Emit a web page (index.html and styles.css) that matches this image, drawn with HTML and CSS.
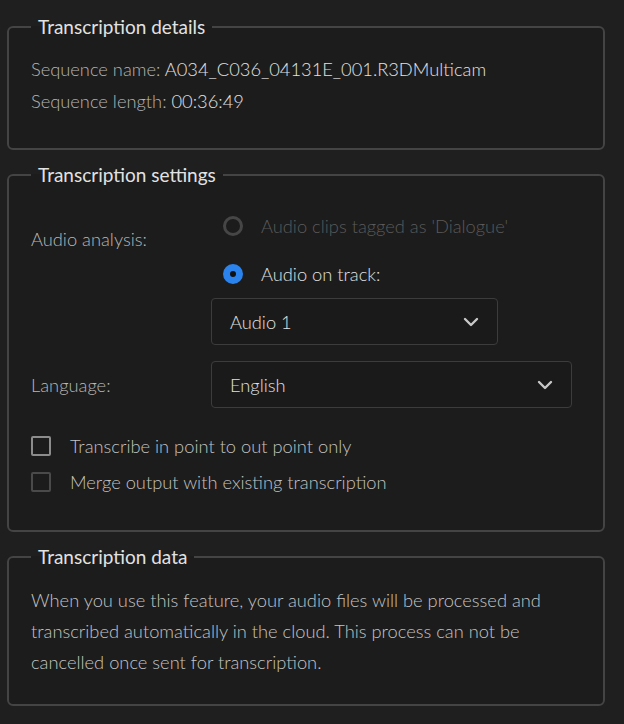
FILE: index.html
```html
<!DOCTYPE html>
<html>
<head>
<meta charset="utf-8">
<link rel="stylesheet" href="styles.css">
</head>
<body>
<div class="panel">
  <fieldset class="group details">
    <legend>Transcription details</legend>
    <div class="line"><span class="key">Sequence name:</span> <span class="val">A034_C036_04131E_001.R3DMulticam</span></div>
    <div class="line"><span class="key">Sequence length:</span> <span class="val">00:36:49</span></div>
  </fieldset>

  <fieldset class="group settings">
    <legend>Transcription settings</legend>
    <div class="form">
      <div class="label analysis">Audio analysis:</div>
      <div class="controls">
        <div class="radio disabled"><span class="dot"></span><span>Audio clips tagged as 'Dialogue'</span></div>
        <div class="radio checked"><span class="dot"></span><span>Audio on track:</span></div>
        <div class="select short"><span>Audio 1</span>
          <svg width="16" height="10" viewBox="0 0 16 10"><path d="M2 2 L8 8 L14 2" fill="none" stroke="#c8c8c8" stroke-width="2.4" stroke-linecap="round" stroke-linejoin="round"/></svg>
        </div>
      </div>
      <div class="label lang">Language:</div>
      <div class="select long"><span>English</span>
        <svg width="16" height="10" viewBox="0 0 16 10"><path d="M2 2 L8 8 L14 2" fill="none" stroke="#c8c8c8" stroke-width="2.4" stroke-linecap="round" stroke-linejoin="round"/></svg>
      </div>
    </div>
    <div class="checks">
      <div class="check"><span class="box"></span><span>Transcribe in point to out point only</span></div>
      <div class="check dim"><span class="box"></span><span>Merge output with existing transcription</span></div>
    </div>
  </fieldset>

  <fieldset class="group data">
    <legend>Transcription data</legend>
    <p>When you use this feature, your audio files will be processed and transcribed automatically in the cloud. This process can not be cancelled once sent for transcription.</p>
  </fieldset>
</div>
</body>
</html>
```

FILE: styles.css
```css
html, body {
  margin: 0;
  padding: 0;
  background: #1f1f1f;
}
body {
  font-family: "Lato", "Noto Sans", sans-serif;
  font-weight: 300;
  font-size: 18.3px;
  color: #b8b8b8;
}
.panel {
  width: 598px;
  padding: 15px 0 0 7px;
  display: flex;
  flex-direction: column;
  gap: 13px;
}
.group {
  margin: 0;
  border: 2px solid #444444;
  border-radius: 6px;
  background: #1c1c1c;
  padding: 0 20px 0 22px;
  min-width: 0;
}
.group legend {
  padding: 0 7px;
  color: #e2e2e2;
  font-size: 19px;
  font-weight: 400;
  line-height: 24px;
}
.details {
  padding-top: 14px;
  padding-bottom: 31px;
}
.line {
  line-height: 32px;
}
.key { color: #b4b4b4; }
.val { color: #e2e2e2; }

.settings {
  padding-top: 15px;
  padding-bottom: 38px;
}
.form {
  display: grid;
  grid-template-columns: 180px 1fr;
  row-gap: 16px;
  align-items: center;
}
.label { color: #b8b8b8; }
.label.analysis {
  align-self: start;
  padding-top: 26px;
}
.controls {
  display: flex;
  flex-direction: column;
}
.radio {
  display: flex;
  align-items: center;
  gap: 18px;
  height: 48px;
  padding-left: 12px;
  color: #e0e0e0;
}
.radio.disabled { color: #5a5a5a; }
.radio .dot {
  width: 14px;
  height: 14px;
  border-radius: 50%;
  border: 3px solid #464646;
  box-sizing: content-box;
  flex: none;
}
.radio.checked .dot {
  width: 6px;
  height: 6px;
  border: 7px solid #2b83ee;
  background: #111;
}
.select {
  box-sizing: border-box;
  height: 47px;
  border: 1px solid #3c3c3c;
  border-radius: 4px;
  background: #1a1a1a;
  display: flex;
  align-items: center;
  justify-content: space-between;
  padding: 0 18px 0 18px;
  color: #e0e0e0;
}
.select.short { width: 287px; }
.select.long { width: 361px; }

.checks {
  margin-top: 28px;
  display: flex;
  flex-direction: column;
  gap: 16px;
}
.check {
  display: flex;
  align-items: center;
  gap: 19px;
  line-height: 20px;
  color: #c2c2c2;
}
.check .box {
  width: 16px;
  height: 16px;
  border: 2px solid #8c8c8c;
  border-radius: 2px;
  flex: none;
}
.check.dim .box { border-color: #4a4a4a; }

.data {
  padding-top: 16px;
  padding-bottom: 26px;
}
.data p {
  margin: 0;
  line-height: 31px;
  color: #c4c4c4;
}
```
